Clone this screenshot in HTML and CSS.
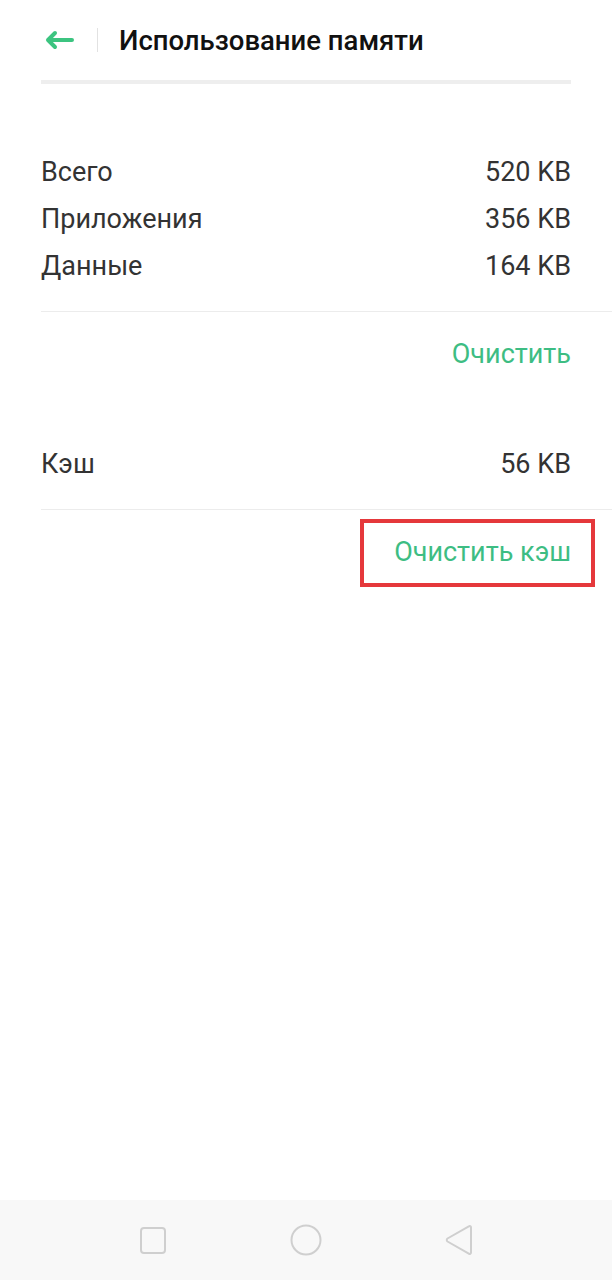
FILE: index.html
```html
<!DOCTYPE html>
<html lang="ru">
<head>
<meta charset="utf-8">
<link rel="stylesheet" href="styles.css">
</head>
<body>
<div class="screen">
  <header class="topbar">
    <svg class="back" width="32" height="20" viewBox="0 0 32 20"><path d="M29 10H5M12 3L5 10l7 7" fill="none" stroke="#3cc480" stroke-width="4" stroke-linecap="round" stroke-linejoin="round"/></svg>
    <span class="vdiv"></span>
    <h1 class="title">Использование памяти</h1>
  </header>
  <div class="bar"></div>

  <section class="group first">
    <div class="row"><span>Всего</span><span>520 KB</span></div>
    <div class="row"><span>Приложения</span><span>356 KB</span></div>
    <div class="row"><span>Данные</span><span>164 KB</span></div>
  </section>
  <div class="line"></div>
  <div class="action a1"><span class="btn">Очистить</span></div>

  <section class="group second">
    <div class="row"><span>Кэш</span><span>56 KB</span></div>
  </section>
  <div class="line"></div>
  <div class="action a2"><span class="btn marked">Очистить кэш<span class="mark"></span></span></div>

  <div class="spacer"></div>
  <nav class="navbar">
    <svg width="28" height="28" viewBox="0 0 28 28"><rect x="2" y="2" width="24" height="25" rx="3" fill="none" stroke="#cfcfcf" stroke-width="2"/></svg>
    <svg width="32" height="32" viewBox="0 0 32 32"><circle cx="16" cy="16" r="14.5" fill="none" stroke="#cfcfcf" stroke-width="2"/></svg>
    <svg width="30" height="32" viewBox="0 0 30 32"><path d="M27 3.5c0-1.2-1.2-1.8-2.2-1.1L3.5 14.5c-1 .7-1 2.3 0 3l21.3 12.1c1 .7 2.2.1 2.2-1.1z" fill="none" stroke="#cfcfcf" stroke-width="2" stroke-linejoin="round"/></svg>
  </nav>
</div>
</body>
</html>
```
FILE: styles.css
```css
* { box-sizing: border-box; }
html, body { margin: 0; padding: 0; background: #fff; }
body { font-family: Roboto, "Noto Sans", "Liberation Sans", sans-serif; }
.screen { width: 612px; height: 1280px; display: flex; flex-direction: column; }
.topbar { height: 80px; display: flex; align-items: center; padding: 0 41px 0 43px; }
.back { display: block; }
.vdiv { width: 1px; height: 24px; background: #e2e2e2; margin: 0 21px 0 22px; }
.title { margin: 0; font-size: 27.5px; font-weight: 500; color: #111; }
.bar { height: 4px; background: #eeeeee; margin: 0 41px; }
.group { padding: 0 41px; }
.group.first { padding-top: 64px; padding-bottom: 22px; }
.group.second { padding-top: 44px; padding-bottom: 22px; }
.row { height: 47px; display: flex; justify-content: space-between; align-items: center; font-size: 27px; color: #333; }
.line { height: 1px; background: #ececec; margin-left: 41px; }
.action { display: flex; justify-content: flex-end; align-items: center; padding: 0 41px; font-size: 27px; color: #3dbd83; }
.a1 { height: 84px; }
.a2 { height: 84px; }
.btn { position: relative; line-height: 32px; }
.mark { position: absolute; left: -34px; right: -24px; top: -17px; bottom: -19px; border: 4px solid #e5383b; }
.spacer { flex: 1; }
.navbar { height: 80px; background: #f8f8f8; display: flex; justify-content: space-between; align-items: center; padding: 0 138px 0 139px; }
.navbar svg { display: block; }
```
